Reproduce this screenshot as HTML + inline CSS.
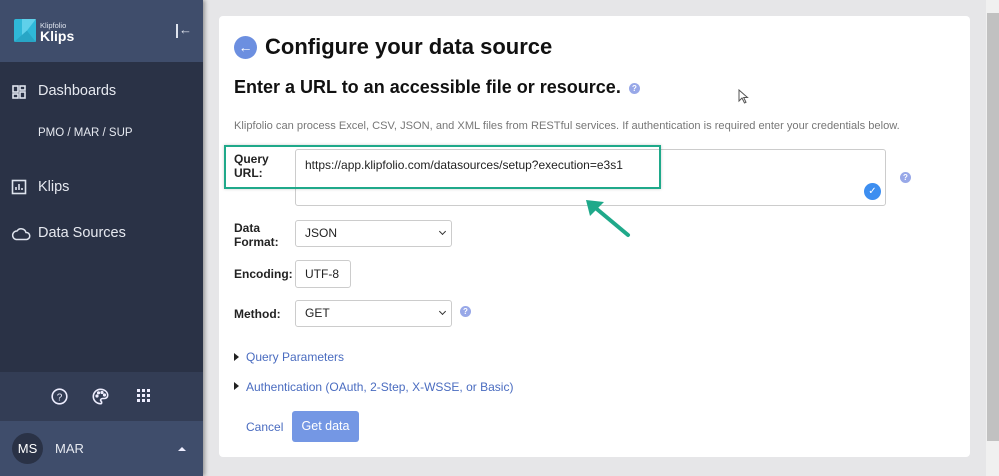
<!DOCTYPE html>
<html><head><meta charset="utf-8"><style>
*{box-sizing:border-box;margin:0;padding:0}
body{width:999px;height:476px;overflow:hidden;background:#e6e6e8;font-family:"Liberation Sans",sans-serif;position:relative}
.sb{position:absolute;left:0;top:0;width:203px;height:476px;background:#2a3246;color:#e6e9f0;box-shadow:2px 0 4px rgba(0,0,0,.35)}
.hd{height:62px;background:#3f4d6b;position:relative}
.nav{position:absolute;left:38px;font-size:14.5px;color:#e6e9f0}
.ic{position:absolute;left:11px}
.bot{position:absolute;left:0;top:372px;width:203px;height:49px;background:#333d55}
.usr{position:absolute;left:0;top:421px;width:203px;height:55px;background:#3f4d6b}
.card{position:absolute;left:219px;top:16px;width:751px;height:441px;background:#fff;border-radius:4px}
.lbl{position:absolute;left:234px;font-size:12px;font-weight:bold;color:#222;line-height:14px}
.inp{position:absolute;border:1px solid #ccc;border-radius:3px;background:#fff;font-size:12px;color:#222;padding-left:9px}
.q{display:inline-block;position:absolute;width:11px;height:11px;border-radius:50%;background:#98a8e8;color:#fff;font-size:8px;font-weight:bold;text-align:center;line-height:11px}
.lnk{position:absolute;color:#4a6cc0;font-size:12px}
.tri{position:absolute;width:0;height:0;border-left:5px solid #222;border-top:4px solid transparent;border-bottom:4px solid transparent}
.chev{position:absolute;right:6px;top:8px;width:5px;height:5px;border-right:1.5px solid #333;border-bottom:1.5px solid #333;transform:rotate(45deg)}
</style></head><body>
<div class="sb">
 <div class="hd">
  <svg style="position:absolute;left:14px;top:19px" width="22" height="23" viewBox="0 0 22 23"><rect width="22" height="23" rx="2" fill="#2fb8d8"/><path d="M8 0H22L13 11.5L22 23H8Z" fill="#5fd0ea"/><path d="M0 23L13 11.5L22 23Z" fill="#28a6c6"/></svg>
  <div style="position:absolute;left:40px;top:21px;font-size:7.5px;color:#dfe4ee">Klipfolio</div>
  <div style="position:absolute;left:40px;top:28px;font-size:14px;font-weight:bold;color:#fff">Klips</div>
  <div style="position:absolute;left:176px;top:24px;width:1.5px;height:14px;background:#dfe4ee"></div>
  <div style="position:absolute;left:179px;top:23px;font-size:13px;color:#dfe4ee;line-height:14px">←</div>
 </div>
 <svg class="ic" style="top:84px" width="16" height="16" viewBox="0 0 16 16" fill="none" stroke="#dfe4ee" stroke-width="1.6"><rect x="2" y="2" width="5" height="6"/><rect x="2" y="10" width="5" height="4"/><rect x="9" y="2" width="5" height="4"/><rect x="9" y="8" width="5" height="6"/></svg>
 <div class="nav" style="top:83px">Dashboards</div>
 <div class="nav" style="top:127px;font-size:11.5px;left:38px">PMO / MAR / SUP</div>
 <svg class="ic" style="top:179px" width="16" height="16" viewBox="0 0 16 16" fill="none" stroke="#dfe4ee" stroke-width="1.6"><rect x="1.5" y="1.5" width="13" height="13"/><path d="M5 11V8M8 11V5M11 11V9"/></svg>
 <div class="nav" style="top:179px">Klips</div>
 <svg class="ic" style="top:226px" width="20" height="15" viewBox="0 0 20 15" fill="none" stroke="#dfe4ee" stroke-width="1.5"><path d="M5 13.5H15.5A3.5 3.5 0 0 0 15 6.5A5 5 0 0 0 6 5A4.3 4.3 0 0 0 5 13.5Z"/></svg>
 <div class="nav" style="top:225px;left:38px">Data Sources</div>
 <div class="bot">
  <svg style="position:absolute;left:51px;top:16px" width="17" height="17" viewBox="0 0 17 17" fill="none" stroke="#eef" stroke-width="1.6"><circle cx="8.5" cy="8.5" r="7.3"/><text x="8.5" y="12.5" font-size="10" text-anchor="middle" fill="#eef" stroke="none" font-family="Liberation Sans">?</text></svg>
  <svg style="position:absolute;left:92px;top:16px" width="17" height="17" viewBox="0 0 17 17" fill="none" stroke="#eef" stroke-width="1.6"><path d="M8.5 1.3A7.2 7.2 0 1 0 8.5 15.7C10 15.7 10 14 9 13C8 12 9 10.5 10.5 10.5H12.5A3.2 3.2 0 0 0 15.7 7.3C15.7 4 12.5 1.3 8.5 1.3Z"/><circle cx="5" cy="8" r=".8" fill="#eef"/><circle cx="6.5" cy="4.8" r=".8" fill="#eef"/><circle cx="10" cy="4.5" r=".8" fill="#eef"/><circle cx="12.5" cy="7" r=".8" fill="#eef"/></svg>
  <svg style="position:absolute;left:137px;top:17px" width="13" height="13" viewBox="0 0 13 13" fill="#eef"><rect x="0" y="0" width="3" height="3"/><rect x="5" y="0" width="3" height="3"/><rect x="10" y="0" width="3" height="3"/><rect x="0" y="5" width="3" height="3"/><rect x="5" y="5" width="3" height="3"/><rect x="10" y="5" width="3" height="3"/><rect x="0" y="10" width="3" height="3"/><rect x="5" y="10" width="3" height="3"/><rect x="10" y="10" width="3" height="3"/></svg>
 </div>
 <div class="usr">
  <div style="position:absolute;left:12px;top:12px;width:31px;height:31px;border-radius:50%;background:#2a3246;color:#fff;font-size:13px;text-align:center;line-height:31px">MS</div>
  <div style="position:absolute;left:55px;top:20px;font-size:13px;color:#e6e9f0">MAR</div>
  <div style="position:absolute;left:178px;top:26px;border-left:4px solid transparent;border-right:4px solid transparent;border-bottom:4px solid #eef"></div>
 </div>
</div>
<div style="position:absolute;left:986px;top:0;width:13px;height:476px;background:#f0f0f0"></div>
<div style="position:absolute;left:987px;top:13px;width:12px;height:428px;background:#c1c1c1"></div>
<div class="card"></div>
<div style="position:absolute;left:234px;top:36px;width:23px;height:23px;border-radius:50%;background:#6c8fe0;color:#fff;font-size:14px;text-align:center;line-height:22px;font-weight:bold">←</div>
<div style="position:absolute;left:265px;top:34px;font-size:22px;font-weight:bold;color:#111">Configure your data source</div>
<div style="position:absolute;left:234px;top:77px;font-size:18px;font-weight:bold;color:#111;white-space:nowrap">Enter a URL to an accessible file or resource.</div>
<div class="q" style="left:629px;top:83px">?</div>
<div style="position:absolute;left:234px;top:120px;font-size:11.1px;color:#777;white-space:nowrap">Klipfolio can process Excel, CSV, JSON, and XML files from RESTful services. If authentication is required enter your credentials below.</div>
<div class="inp" style="left:295px;top:149px;width:591px;height:57px;padding-top:8px">https://app.klipfolio.com/datasources/setup?execution=e3s1</div>
<div style="position:absolute;left:224px;top:145px;width:437px;height:44px;border:2px solid #1fa98a;box-shadow:0 0 3px rgba(0,0,0,.2)"></div>
<div class="lbl" style="top:152px">Query<br>URL:</div>
<div style="position:absolute;left:864px;top:183px;width:17px;height:17px;border-radius:50%;background:#3d8ef0;color:#fff;font-size:10px;text-align:center;line-height:17px">✓</div>
<div class="q" style="left:900px;top:172px">?</div>
<svg style="position:absolute;left:584px;top:196px" width="50" height="44" viewBox="0 0 50 44"><path d="M44 39L8 9" stroke="#1fa98a" stroke-width="4" stroke-linecap="round"/><path d="M2 4L20 6L6 20Z" fill="#1fa98a"/></svg>
<div class="lbl" style="top:221px">Data<br>Format:</div>
<div class="inp" style="left:295px;top:220px;width:157px;height:27px;line-height:25px">JSON<span class="chev"></span></div>
<div class="lbl" style="top:267px">Encoding:</div>
<div class="inp" style="left:295px;top:260px;width:56px;height:28px;line-height:26px">UTF-8</div>
<div class="lbl" style="top:307px">Method:</div>
<div class="inp" style="left:295px;top:300px;width:157px;height:27px;line-height:25px">GET<span class="chev"></span></div>
<div class="q" style="left:460px;top:306px">?</div>
<div class="tri" style="left:234px;top:353px"></div>
<div class="lnk" style="left:246px;top:350px">Query Parameters</div>
<div class="tri" style="left:234px;top:382px"></div>
<div class="lnk" style="left:246px;top:380px">Authentication (OAuth, 2-Step, X-WSSE, or Basic)</div>
<div class="lnk" style="left:246px;top:420px">Cancel</div>
<div style="position:absolute;left:292px;top:411px;width:67px;height:31px;background:#7497e4;border-radius:3px;color:#fff;font-size:12.5px;text-align:center;line-height:31px">Get data</div>
<svg style="position:absolute;left:738px;top:89px" width="11" height="15" viewBox="0 0 11 15"><path d="M1 1V12L4 9L6.5 14L8 13.3L5.7 8.5H9.5Z" fill="#fff" stroke="#555" stroke-width="1"/></svg>
</body></html>
